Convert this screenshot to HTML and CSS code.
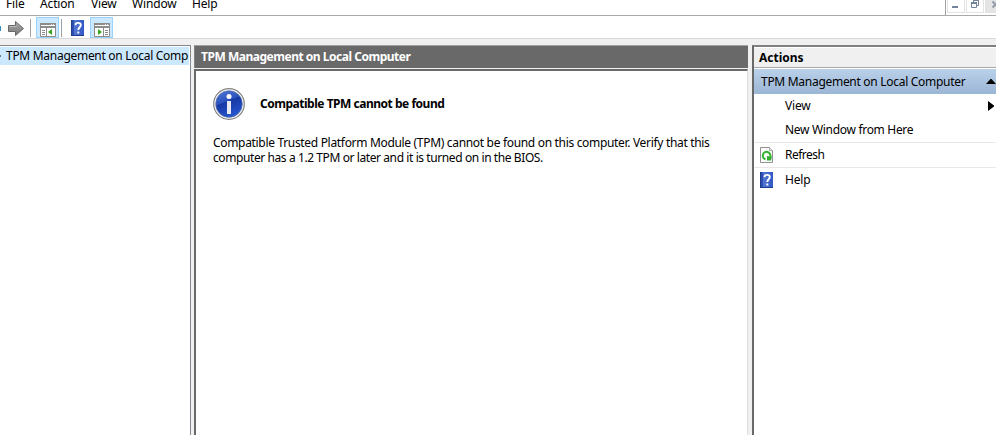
FILE: index.html
```html
<!DOCTYPE html>
<html lang="en">
<head>
<meta charset="utf-8">
<title>TPM Management on Local Computer</title>
<link rel="stylesheet" href="styles.css">
</head>
<body>
<svg class="defs" width="0" height="0" aria-hidden="true">
  <defs>
    <linearGradient id="bookFill" x1="0" x2="1"><stop offset="0" stop-color="#27479f"/><stop offset=".2" stop-color="#2d50b5"/><stop offset=".25" stop-color="#5276d2"/><stop offset="1" stop-color="#3158c5"/></linearGradient>
    <linearGradient id="arrowFill" x1="0" y1="0" x2="0" y2="1"><stop offset="0" stop-color="#aaa"/><stop offset="1" stop-color="#777"/></linearGradient>
    <linearGradient id="infoFill" x1="0" y1="0" x2=".4" y2="1"><stop offset="0" stop-color="#547bd6"/><stop offset=".48" stop-color="#2951bd"/><stop offset=".5" stop-color="#1638a2"/><stop offset="1" stop-color="#2453cc"/></linearGradient>
    <symbol id="book" viewBox="0 0 13 16"><path fill="url(#bookFill)" d="M0 0h13v16H0z"/><path fill="#203c8c" d="M0 0h1v16H0zM0 15h13v1H0z"/><path d="M4.500 5.200C4.500 2.200 9.800 2.100 9.800 5c0 2.200-2.500 2.300-2.500 5" fill="none" stroke="#fff" stroke-width="1.900"/><path fill="#fff" d="M6.300 11.500h2v2h-2z"/></symbol>
  </defs>
</svg>
<header class="menubar">
  <nav class="menus"><span class="m-file">File</span><span class="m-action">Action</span><span class="m-view">View</span><span class="m-window">Window</span><span class="m-help">Help</span></nav>
  <div class="caption">
    <span class="cap"><svg width="16" height="12"><path fill="#73859a" d="M4 6h6v2H4z"/></svg></span>
    <span class="cap"><svg width="16" height="12"><path d="M6.500 2V.5h5v5h-2M4.500 3.500h5v4h-5z" fill="none" stroke="#73859a"/><path fill="#73859a" d="M4 2h6v2H4zM6 0h6v1H6z"/></svg></span>
    <span class="cap off"><svg width="16" height="12"><path d="M6.500 1.500l6 6m0-6l-6 6" stroke="#929dab" stroke-width="2"/></svg></span>
  </div>
</header>
<div class="toolbar">
  <svg class="back" width="2" height="22"><path fill="#348bc5" d="M0 10h1v5H0z"/></svg>
  <svg class="forward" width="18" height="22"><path d="M.5 9.500h7v-4L15.500 12.500l-8 7v-4h-7z" fill="url(#arrowFill)" stroke="#686868"/><path d="M1.500 10.500h7" stroke="#bbb"/></svg>
  <i class="sep"></i>
  <span class="tool"><svg width="16" height="14"><path fill="#fff" stroke="#8c8c8c" d="M.5.5h15v13H.5z"/><path fill="#8c8c8c" d="M0 0h16v2H0zM0 3h16v2H0z"/><path fill="#ddd" d="M11 1h1v1h-1zM13 1h1v1h-1z"/><path stroke="#8c8c8c" d="M6.500 5v8M2 7.500h3M2 9.500h3M2 11.500h3"/><path fill="#35a51d" d="M12 6v6L8 9z"/></svg></span>
  <i class="sep"></i>
  <svg class="bookicon" width="13" height="16"><use href="#book"/></svg>
  <span class="tool"><svg width="16" height="14"><path fill="#fff" stroke="#8c8c8c" d="M.5.5h15v13H.5z"/><path fill="#8c8c8c" d="M0 0h16v2H0zM0 3h16v2H0z"/><path fill="#ddd" d="M11 1h1v1h-1zM13 1h1v1h-1z"/><path stroke="#8c8c8c" d="M9.500 5v8M11 7.500h3M11 9.500h3M11 11.500h3"/><path fill="#35a51d" d="M4 6v6l4-3z"/></svg></span>
</div>
<main class="panes">
  <aside class="tree"><div class="node"><svg width="2" height="6"><path fill="#777" d="M0 2h1v2H0z"/></svg><span class="t-tree">TPM Management on Local Comp</span></div></aside>
  <section class="center">
    <h1><span class="t-title">TPM Management on Local Computer</span></h1>
    <div class="content">
      <div class="message">
        <svg width="32" height="32"><circle cx="16" cy="16" r="15.300" fill="#f4f4f4" stroke="#858585" stroke-width="1.200"/><circle cx="16" cy="16" r="13.300" fill="url(#infoFill)" stroke="#5870a9" stroke-width=".7"/><circle cx="16" cy="8.500" r="2.500" fill="#fff"/><path fill="#e9ebf2" d="M14 13h4v13h-4z"/></svg>
        <h2><span class="t-msg">Compatible TPM cannot be found</span></h2>
      </div>
      <p><span class="t-p1">Compatible Trusted Platform Module (TPM) cannot be found on this computer. Verify that this</span><span class="t-p2">computer has a 1.2 TPM or later and it is turned on in the BIOS.</span></p>
    </div>
  </section>
  <aside class="actions">
    <h3><span class="t-actions">Actions</span></h3>
    <div class="group"><span class="t-group">TPM Management on Local Computer</span><svg width="10" height="5"><path d="M0 5l4.500-5h1L10 5z"/></svg></div>
    <div class="item first"><span class="t-view">View</span><svg class="more" width="6" height="10"><path d="M0 0l6 4.500v1L0 10z"/></svg></div>
    <div class="item line"><span class="t-new">New Window from Here</span></div>
    <div class="item line"><svg class="icon" width="13" height="16"><path d="M.5.5h9l3 3v12H.5z" fill="#fafafa" stroke="#929292"/><path d="M9.500.5v3h3" fill="#eee" stroke="#aaa"/><path d="M5.500 12.300A3.800 3.800 0 1 1 10.300 9.500" fill="none" stroke="#32b52e" stroke-width="2"/><path fill="#32ad2e" d="M7 9l5 .5-1 4H7z"/></svg><span class="t-refresh">Refresh</span></div>
    <div class="item"><svg class="icon" width="13" height="16"><use href="#book"/></svg><span class="t-help">Help</span></div>
  </aside>
</main>
</body>
</html>
```
FILE: styles.css
```css
* { box-sizing: border-box; }
body { margin: 0; height: 435px; overflow: hidden; background: #f0f0f0; color: #000; font: 12px/16px "Noto Sans", "Open Sans", sans-serif; display: flex; flex-direction: column; }
svg { display: block; flex: none; }
.defs { position: absolute; }
span { white-space: nowrap; }
h1, h2, h3, p { margin: 0; font-size: 12px; }
.menubar { height: 16px; flex: none; background: #fff; display: flex; border-bottom: 1px solid #a9a9a9; }
.menus { width: 946px; height: 15px; display: flex; border-right: 1px solid #a0a0a0; padding-left: 6px; letter-spacing: -.15px; }
.menus span { margin-top: -4px; height: 16px; }
.m-file { width: 34px; }
.m-action { width: 51px; }
.m-view { width: 41px; }
.m-window { width: 60px; }
.caption { display: flex; gap: 1px; padding-left: 1px; overflow: hidden; width: 50px; }
.cap { width: 18px; height: 13px; flex: none; border: 1px solid #e2e2e2; border-top: 0; }
.off { background: #e4e4e4; }
.toolbar { height: 23px; flex: none; background: #fff; border-bottom: 1px solid #d9d9d9; display: flex; align-items: flex-start; }
.forward { margin-left: 6px; }
.sep { width: 1px; height: 18px; margin: 3px 0 0 4px; background: #a0a0a0; }
.tool { width: 23px; height: 21px; border: 1px solid #99d1ff; background: #cce8ff; margin: 1px 0 0 5px; padding: 5px 0 0 3px; }
.tool + .sep { margin-left: 2px; }
.bookicon { margin: 4px 1px 0 9px; }
.panes { flex: 1; display: flex; padding-top: 6px; min-height: 0; }
.tree { width: 191px; background: #fff; border-top: 1px solid #828790; border-right: 1px solid #828790; padding-top: 1px; margin-right: 3px; }
.node { width: 189px; height: 18px; background: #cce8ff; display: flex; align-items: center; overflow: hidden; }
.node span { margin: 0 0 1px 4px; }
.t-tree, .t-group { letter-spacing: -.29px; }
.t-title { letter-spacing: -.48px; }
.t-msg { letter-spacing: -.48px; }
.t-p1 { letter-spacing: -.32px; }
.t-p2 { letter-spacing: -.41px; }
.t-new { letter-spacing: -.31px; }
.t-refresh { letter-spacing: -.5px; }
.t-help, .t-view { letter-spacing: -.2px; }
.center { width: 554px; display: flex; flex-direction: column; }
h1 { height: 23px; flex: none; background: #696969; border-top: 1px solid #a0a0a0; border-left: 1px solid #808080; color: #fff; padding: 3px 0 0 6px; }
.content { flex: 1; margin-top: 1px; background: #fff; border: 1px solid #696969; border-left-width: 2px; border-top-width: 2px; border-right-color: #dedede; border-bottom: 0; padding: 17px 0 0 17px; }
.message { display: flex; gap: 15px; align-items: center; }
.content p { margin-top: 15px; line-height: 15px; }
.content p span { display: block; }
.actions { flex: 1; min-width: 0; margin-left: 4px; background: #fff; border-left: 2px solid #696969; border-top: 2px solid #808080; }
h3 { height: 21px; background: #f0f0f0; border-top: 1px solid #fff; border-bottom: 1px solid #a9a9a9; padding: 2px 0 0 5px; }
.group { height: 25px; margin-top: 1px; background: linear-gradient(#bad1e9, #9bb5d5); display: flex; align-items: center; justify-content: space-between; padding: 0 0 0 7px; }
.item { height: 25px; display: flex; align-items: center; padding-left: 31px; border-bottom: 1px solid transparent; }
.first { height: 24px; border-bottom: 0; }
.line { border-bottom-color: #e8e8e8; }
.icon { margin: 0 12px 0 -25px; }
.more { margin: 0 2px 0 auto; }
```
